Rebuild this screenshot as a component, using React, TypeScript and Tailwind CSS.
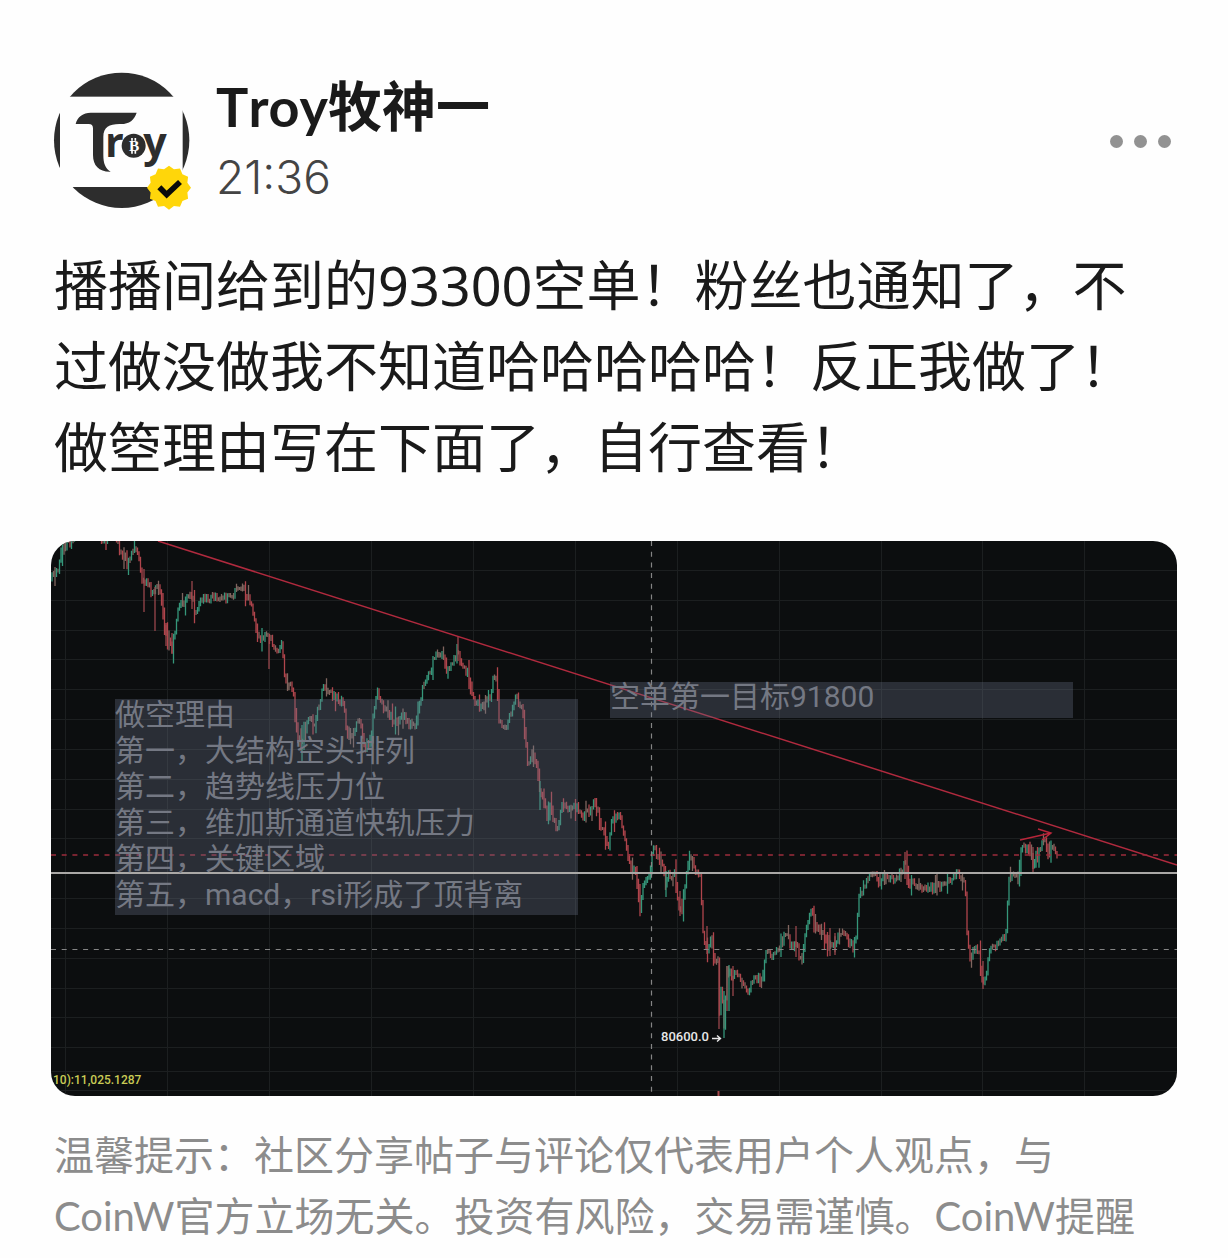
import { useMemo } from "react";

// price path, in chart units
const TRACK: [number, number][] = [
  [1, 38], [7, 31], [11, 9], [16, 3], [21, 5], [24, -8], [46, -8], [49, 0], [54, 1], [60, -8], [66, -2],
  [71, 18], [76, 23], [82, 9], [87, 14], [92, 42], [96, 42], [101, 52], [107, 45], [111, 62], [114, 86],
  [121, 108], [124, 89], [127, 66], [132, 62], [141, 54], [143, 70], [154, 56], [166, 57], [179, 57],
  [187, 44], [199, 59], [206, 92], [211, 99], [216, 89], [221, 102], [227, 112], [231, 102], [234, 139],
  [242, 146], [246, 192], [251, 199], [257, 179], [264, 181], [272, 146], [282, 155], [292, 162],
  [296, 192], [301, 196], [309, 176], [314, 206], [319, 199], [326, 151], [332, 166], [346, 182],
  [352, 174], [359, 184], [366, 181], [371, 149], [376, 139], [379, 132], [382, 116], [392, 112],
  [396, 131], [407, 112], [412, 129], [417, 132], [422, 156], [429, 166], [439, 157], [443, 132],
  [446, 142], [448, 179], [452, 189], [461, 172], [464, 154], [471, 166], [474, 192], [477, 229],
  [482, 212], [486, 222], [489, 252], [492, 256], [496, 279], [499, 259], [502, 276], [506, 289],
  [511, 262], [519, 267], [526, 266], [531, 277], [544, 262], [551, 289], [557, 307], [561, 279],
  [569, 272], [574, 299], [579, 326], [584, 329], [589, 366], [594, 337], [599, 334], [602, 306],
  [611, 322], [615, 346], [617, 334], [624, 332], [627, 362], [631, 372], [636, 326], [639, 316],
  [644, 329], [649, 332], [652, 392], [656, 409], [660, 396], [664, 422], [667, 419], [668, 480],
  [670, 446], [673, 482], [676, 429], [682, 436], [687, 432], [697, 451], [704, 437], [711, 436],
  [715, 412], [722, 416], [736, 392], [739, 402], [746, 406], [749, 419], [752, 412], [756, 382],
  [760, 372], [766, 386], [779, 406], [792, 392], [802, 406], [806, 392], [807, 359], [816, 339],
  [824, 334], [828, 346], [834, 332], [841, 339], [852, 329], [854, 319], [857, 342], [871, 347],
  [882, 347], [896, 344], [902, 334], [907, 332], [914, 339], [916, 389], [919, 416], [926, 406],
  [929, 419], [932, 444], [935, 432], [939, 409], [944, 407], [952, 399], [956, 389], [957, 342],
  [961, 332], [967, 336], [969, 316], [972, 306], [981, 312], [982, 324], [989, 306], [994, 302],
  [997, 312], [1002, 307], [1006, 317],
];

// the long wicks: x, top, bottom, rising
const SPIKES: [number, number, number, boolean][] = [
  [93, 28, 71, false], [104, 46, 90, false], [141, 40, 68, false], [218, 96, 128, false],
  [251, 184, 222, true], [407, 96, 120, false], [489, 240, 269, true], [668, 420, 488, false],
  [673, 450, 497, true], [676, 425, 470, false], [745, 385, 416, false], [854, 311, 338, false],
  [932, 420, 448, false], [982, 306, 331, false], [115, 84, 105, false], [121, 92, 113, false],
  [656, 385, 413, false], [678, 424, 470, true], [682, 425, 455, false], [779, 387, 415, false],
  [784, 392, 414, false], [629, 350, 375, false], [615, 330, 356, true],
];

const GRID_Y = [29, 59, 89, 118, 148, 178, 208, 238, 268, 297, 357, 387, 417, 447, 476, 506, 530, 549];
const GRID_X = [14, 116, 218, 320, 422, 524, 626, 728, 830, 931, 1033];

const REASONS = [
  "做空理由",
  "第一，大结构空头排列",
  "第二，趋势线压力位",
  "第三，维加斯通道快轨压力",
  "第四，关键区域",
  "第五，macd，rsi形成了顶背离",
];

function buildCandles() {
  let seed = 17;
  const rand = () => {
    seed = (seed * 16807) % 2147483647;
    return seed / 2147483647;
  };
  let up = "";
  let down = "";
  let flat = "";
  let i = 0;
  let prev = TRACK[0][1];
  for (let x = 1; x <= 1006; x += 1.5) {
    while (i < TRACK.length - 2 && TRACK[i + 1][0] < x) i++;
    const [x0, y0] = TRACK[i];
    const [x1, y1] = TRACK[i + 1];
    const y = y0 + ((y1 - y0) * (x - x0)) / (x1 - x0) + (rand() - 0.5) * 8;
    // the stretch around x 150-185 is much calmer than the rest
    const calm = x > 150 && x < 185;
    const long = !calm && rand() > 0.75 ? 11 : 2;
    const top = Math.min(prev, y) - rand() * long - 1;
    const bottom = Math.max(prev, y) + rand() * long + 1;
    const seg = `M${x.toFixed(1)} ${top.toFixed(1)}V${bottom.toFixed(1)}`;
    if (Math.abs(y - prev) < 2.5) flat += seg;
    else if (y < prev) up += seg;
    else down += seg;
    prev = y;
  }
  return { up, down, flat };
}

function Avatar() {
  const badge = Array.from({ length: 24 }, (_, i) => {
    const r = i % 2 ? 57 : 66;
    const a = (i * Math.PI) / 12;
    return `${(387 + r * Math.sin(a)).toFixed(1)},${(383 - r * Math.cos(a)).toFixed(1)}`;
  }).join(" ");

  return (
    <svg viewBox="36 33 420 420" className="w-[140px] h-[140px] shrink-0" role="img" aria-label="Troy">
      <circle cx="245" cy="241" r="203" fill="#2d2d2d" />
      <rect x="60" y="110" width="368" height="271" fill="#fefefe" />
      <path
        d="M107 192C112 170 130 158 152 158H290C283 180 268 192 243 192H238C208 192 190 202 190 230V285C190 310 196 326 212 335C178 336 159 318 159 285V205C159 196 155 192 146 192Z"
        fill="#2d2d2d"
      />
      <text x="195" y="290" fontSize="124" className="font-['Open_Sans'] font-bold fill-[#2d2d2d]">
        r
      </text>
      <text x="310" y="290" fontSize="124" className="font-['Open_Sans'] font-bold fill-[#2d2d2d]">
        y
      </text>
      <circle cx="281" cy="257" r="36" fill="#2d2d2d" />
      <path d="M276 234V242M286 234V242M276 272V281M286 272V281" stroke="#fff" strokeWidth="5" />
      <text x="282" y="273" fontSize="46" textAnchor="middle" className="font-['Liberation_Serif'] font-bold fill-white">
        B
      </text>
      <polygon points={badge} fill="#ffd60a" />
      <path d="M358 382L380 404L420 366" fill="none" stroke="#0a0a0a" strokeWidth="17" />
    </svg>
  );
}

function Chart() {
  const candles = useMemo(buildCandles, []);

  return (
    <svg
      viewBox="0 0 1126 555"
      className="block w-full rounded-3xl bg-[#0c0e0f] font-[Roboto,'Noto_Sans_CJK_SC',sans-serif]"
      role="img"
      aria-label="做空理由"
    >
      <g stroke="#1c1f20" strokeWidth="1">
        {GRID_Y.map((y) => (
          <line key={y} x1="0" x2="1126" y1={y + 0.5} y2={y + 0.5} />
        ))}
        {GRID_X.map((x) => (
          <line key={x} x1={x + 0.5} x2={x + 0.5} y1="0" y2="555" />
        ))}
      </g>

      <g fill="none" strokeWidth="1.3">
        <path d={candles.flat} stroke="#80665f" />
        <path d={candles.down} stroke="#b0454c" />
        <path d={candles.up} stroke="#35977a" />
        {SPIKES.map(([x, top, bottom, rising]) => (
          <line key={`${x}-${top}`} x1={x} x2={x} y1={top} y2={bottom} stroke={rising ? "#35977a" : "#9a484c"} />
        ))}
      </g>
      <line x1="667.5" x2="667.5" y1="550" y2="555" stroke="#a8484d" strokeWidth="2" />

      <line x1="107" y1="0" x2="1126" y2="324" stroke="#b02a3e" strokeWidth="1.5" />
      <path d="M969 299L1000 292M987 288L1000 292L991 299" fill="none" stroke="#b8263a" strokeWidth="1.5" />

      <line x1="0" x2="1126" y1="314" y2="314" stroke="#9c2d3c" strokeWidth="1.3" strokeDasharray="5 5.7" />
      <line x1="0" x2="1126" y1="408.5" y2="408.5" stroke="#858585" strokeWidth="1.2" strokeDasharray="5 5.7" />
      <line x1="600.5" x2="600.5" y1="0" y2="555" stroke="#858585" strokeWidth="1.2" strokeDasharray="5 5.7" />

      <rect x="64" y="158" width="463" height="216" fill="#6b7288" fillOpacity="0.32" />
      <rect x="559" y="141" width="463" height="36" fill="#6b7288" fillOpacity="0.32" />
      <line x1="0" x2="1126" y1="332" y2="332" stroke="#aaa8a6" strokeWidth="1.8" />

      <g fontSize="30" fill="#747883">
        {REASONS.map((line, i) => (
          <text key={line} x="64" y={184 + i * 36}>
            {line}
          </text>
        ))}
        <text x="559" y="166">
          空单第一目标91800
        </text>
      </g>

      <text x="610" y="500" fontSize="13" fontWeight="500" fill="#e8e8e8">
        80600.0
      </text>
      <path d="M661 497.500H669M666 494.500L669.500 497.500L666 500.500" fill="none" stroke="#e8e8e8" strokeWidth="1.4" />
      <text x="2" y="543" fontSize="12" fontWeight="500" fill="#c9cb55">
        10):11,025.1287
      </text>
    </svg>
  );
}

export default function App() {
  return (
    <div className="min-h-screen bg-[#fefefe] px-[51px] pt-[71px]">
      <header className="flex items-center pl-px">
        <Avatar />
        <div className="ml-6 flex-grow">
          <h1 className="font-[Lato,'Noto_Sans_CJK_SC',sans-serif] text-[54px] leading-[72px] font-bold text-[#1a1a1a] [font-kerning:none]">
            Troy牧神一
          </h1>
          <time className="block font-[Inter,sans-serif] text-[46px] leading-[68px] font-light text-[#444]">21:36</time>
        </div>
        <button type="button" aria-label="更多" className="flex gap-[11px] p-1.5">
          <span className="size-[13px] rounded-full bg-[#929292]" />
          <span className="size-[13px] rounded-full bg-[#929292]" />
          <span className="size-[13px] rounded-full bg-[#929292]" />
        </button>
      </header>

      <p className="mt-[34px] px-[3px] font-['Noto_Sans','Noto_Sans_CJK_SC',sans-serif] text-[54px] leading-[81px] text-[#1a1a1a]">
        播播间给到的93300空单！粉丝也通知了，不过做没做我不知道哈哈哈哈哈！反正我做了！做箜理由写在下面了，自行查看！
      </p>

      <div className="mt-[53px]">
        <Chart />
      </div>

      <p className="mt-[29px] pl-[3px] pr-4 font-[Lato,'Noto_Sans_CJK_SC',sans-serif] text-[40px] leading-[61px] text-[#8c8c8c]">
        温馨提示：社区分享帖子与评论仅代表用户个人观点，与CoinW官方立场无关。投资有风险，交易需谨慎。CoinW提醒
      </p>
    </div>
  );
}
